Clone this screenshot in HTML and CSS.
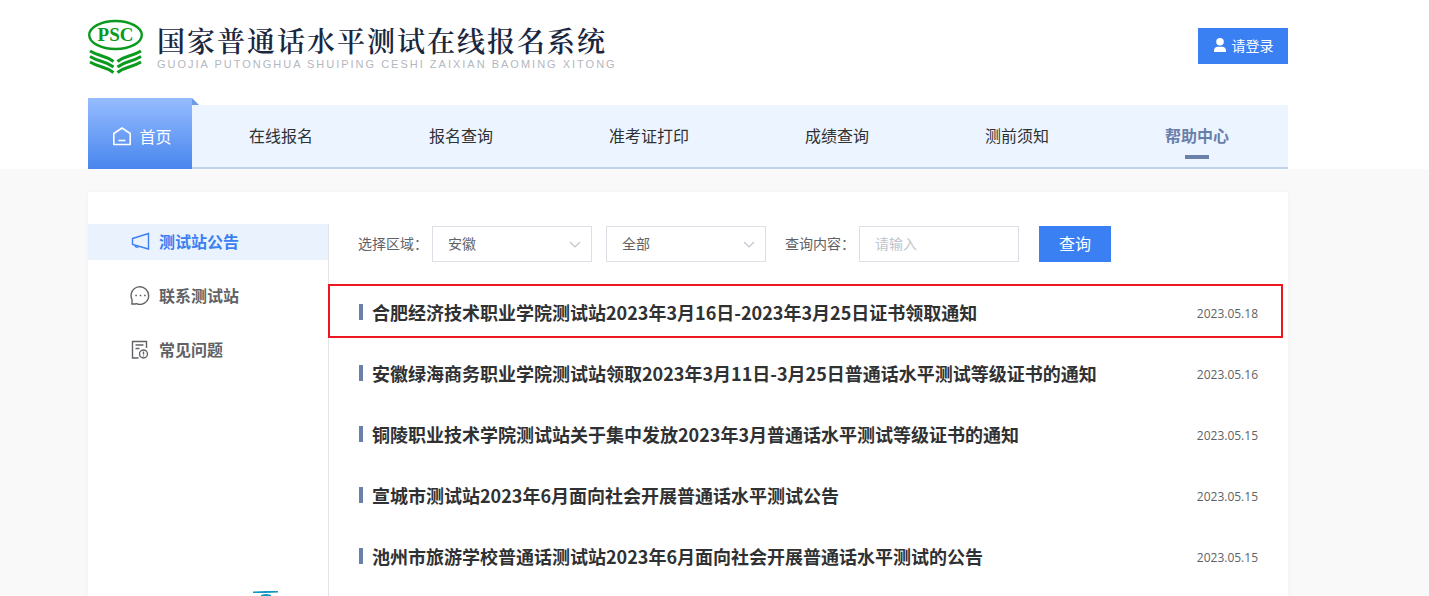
FILE: index.html
```html
<!DOCTYPE html>
<html lang="zh-CN">
<head>
    <meta charset="UTF-8">
    <meta name="viewport" content="width=device-width, initial-scale=1.0">
    <title>国家普通话水平测试在线报名系统</title>
    <link rel="stylesheet" href="styles.css">
</head>
<body>

<header class="header">
    <div class="container header-top">
        <a class="logo" href="#">
            <svg class="logo-mark" viewBox="0 -2 56 56" width="56" height="56" aria-hidden="true">
                <ellipse cx="27.5" cy="15" rx="26.3" ry="14" fill="#fff" stroke="#0a9a1e" stroke-width="2.4"/>
                <text class="logo-psc" x="27.5" y="21" text-anchor="middle">PSC</text>
                <g fill="none" stroke="#0a9a1e" stroke-width="3">
                    <path d="M2 31q5 3 12 5q7 2 11.500 5.500"/>
                    <path d="M2 36.500q5 3 12 5q7 2 11.500 5.500"/>
                    <path d="M2 42q5 3 12 5q7 2 11.500 5.500"/>
                    <path d="M53 31q-5 3-12 5q-7 2-11.500 5.500"/>
                    <path d="M53 36.500q-5 3-12 5q-7 2-11.500 5.500"/>
                    <path d="M53 42q-5 3-12 5q-7 2-11.500 5.500"/>
                </g>
            </svg>
            <span class="logo-text">
                <span class="logo-title">国家普通话水平测试在线报名系统</span>
                <span class="logo-pinyin">GUOJIA PUTONGHUA SHUIPING CESHI ZAIXIAN BAOMING XITONG</span>
            </span>
        </a>
        <button class="btn login" type="button">
            <svg viewBox="0 0 14 14" width="14" height="14" fill="#fff" aria-hidden="true">
                <circle cx="7" cy="3.800" r="3.800"/>
                <path d="M1 14v-1.500a4 4 0 0 1 4-3.700h4a4 4 0 0 1 4 3.700v1.500z"/>
            </svg>
            请登录
        </button>
    </div>

    <nav class="container nav">
        <a class="nav-home" href="#">
            <svg viewBox="0 0 20 20" width="20" height="20" fill="none" stroke="#fff" stroke-width="1.600" stroke-linejoin="round" aria-hidden="true">
                <path d="M1.800 7.500L10 2l8.200 5.500V18.500H1.800z"/>
                <path d="M6.500 14.500h7"/>
            </svg>
            首页
        </a>
        <div class="nav-bar">
            <a class="nav-link" href="#">在线报名</a>
            <a class="nav-link" href="#">报名查询</a>
            <a class="nav-link" href="#">准考证打印</a>
            <a class="nav-link" href="#">成绩查询</a>
            <a class="nav-link" href="#">测前须知</a>
            <a class="nav-link active" href="#">帮助中心</a>
        </div>
    </nav>
</header>

<main class="container panel">
    <aside class="sidebar">
        <a class="side-link active" href="#">
            <svg viewBox="0 0 20 20" width="20" height="20" fill="none" stroke="currentColor" stroke-width="1.400" aria-hidden="true">
                <path d="M2.500 7.500L18.500 2.500v15.500L2.500 13.500z"/>
                <path d="M5 14.200a2 2 0 0 0 3.700 1"/>
            </svg>
            测试站公告
        </a>
        <a class="side-link" href="#">
            <svg viewBox="0 0 20 20" width="20" height="20" fill="none" stroke="currentColor" stroke-width="1.400" aria-hidden="true">
                <path d="M2 19v-4.500A8.800 8.800 0 1 1 6.500 18.700L5 19z"/>
                <path d="M5.300 10.500h1.600M9.700 10.500h1.600M14.100 10.500h1.600" stroke-width="1.600"/>
            </svg>
            联系测试站
        </a>
        <a class="side-link" href="#">
            <svg viewBox="0 0 20 20" width="20" height="20" fill="none" stroke="currentColor" stroke-width="1.400" aria-hidden="true">
                <path d="M8.500 19H2.500V2.500h14V9M5.500 6h8M5.500 9.500h4"/>
                <circle cx="13.500" cy="15" r="4"/>
                <path d="M13.500 12.500v3M13.500 16.500v1"/>
            </svg>
            常见问题
        </a>
        <svg class="side-float" viewBox="0 0 26 6" width="26" height="6" aria-hidden="true">
            <path d="M0 1.500l13-.5L25 1v1.500L13 3 0 3z" fill="#1398c2"/>
            <path d="M8 5q5-2 10 0v1H8z" fill="#1398c2"/>
        </svg>
    </aside>

    <section class="content">
        <form class="filters">
            <label for="area">选择区域：</label>
            <div class="select-box">
                <select class="field" id="area">
                    <option>安徽</option>
                </select>
                <svg class="arrow" viewBox="0 0 12 8" width="12" height="8" fill="none" stroke="#c0c4cc" stroke-width="1.200" aria-hidden="true"><path d="M1 1l5 5 5-5"/></svg>
            </div>
            <div class="select-box">
                <select class="field" aria-label="城市">
                    <option>全部</option>
                </select>
                <svg class="arrow" viewBox="0 0 12 8" width="12" height="8" fill="none" stroke="#c0c4cc" stroke-width="1.200" aria-hidden="true"><path d="M1 1l5 5 5-5"/></svg>
            </div>
            <label class="label-query" for="keyword">查询内容：</label>
            <input class="field" id="keyword" type="text" placeholder="请输入">
            <button class="btn search" type="button">查询</button>
        </form>

        <ul class="news">
            <li class="news-item marked">
                <a href="#">合肥经济技术职业学院测试站2023年3月16日-2023年3月25日证书领取通知</a>
                <time>2023.05.18</time>
            </li>
            <li class="news-item">
                <a href="#">安徽绿海商务职业学院测试站领取2023年3月11日-3月25日普通话水平测试等级证书的通知</a>
                <time>2023.05.16</time>
            </li>
            <li class="news-item">
                <a href="#">铜陵职业技术学院测试站关于集中发放2023年3月普通话水平测试等级证书的通知</a>
                <time>2023.05.15</time>
            </li>
            <li class="news-item">
                <a href="#">宣城市测试站2023年6月面向社会开展普通话水平测试公告</a>
                <time>2023.05.15</time>
            </li>
            <li class="news-item">
                <a href="#">池州市旅游学校普通话测试站2023年6月面向社会开展普通话水平测试的公告</a>
                <time>2023.05.15</time>
            </li>
        </ul>
    </section>
</main>

</body>
</html>
```

FILE: styles.css
```css
*, *::before, *::after { box-sizing: border-box; }
body { margin: 0; min-height: 100vh; display: flex; flex-direction: column; background-color: #f9f9f9; color: #303133; font-family: "Open Sans", "Noto Sans CJK SC", sans-serif; font-size: 14px; }
a { color: inherit; text-decoration: none; }
button, input, select { font-family: inherit; }
.container { width: calc(100% - 229px); margin: 0 141px 0 88px; }
.btn { border: 0; padding: 0 0 2px; background-color: #3a80f3; color: #fff; height: 36px; cursor: pointer; }

/* header */
.header { background-color: #fff; }
.header-top { display: flex; justify-content: space-between; align-items: center; height: 98px; padding-bottom: 6px; }
.logo { display: flex; align-items: center; gap: 13px; }
.logo-psc { font-family: "Liberation Serif", serif; font-size: 19px; font-weight: bold; fill: #0a9a1e; }
.logo-text { display: flex; flex-direction: column; color: #1b2740; }
.logo-title { font-family: "Noto Serif CJK SC", "Noto Sans CJK SC", serif; font-size: 28px; font-weight: 600; line-height: 36px; letter-spacing: 2px; }
.logo-pinyin { font-family: "Liberation Sans", sans-serif; font-size: 11px; line-height: 12px; letter-spacing: 2px; color: #b4b7c0; }
.login { display: flex; align-items: center; justify-content: center; gap: 5px; width: 90px; font-size: 14px; }

/* nav */
.nav { display: flex; align-items: flex-end; font-size: 16px; }
.nav-home { position: relative; display: flex; align-items: center; justify-content: center; gap: 7px; width: 104px; height: 71px; padding: 4px 0 0 4px; color: #fff; background: linear-gradient(#96bcff, #4886ee); }
.nav-home::after { content: ""; position: absolute; left: 100%; top: 0; border-bottom: 7px solid #6b9ae6; border-right: 7px solid transparent; }
.nav-bar { flex: 1; display: flex; gap: 116px; height: 64px; padding-left: 57px; background-color: #ecf5ff; border-bottom: 2px solid #c0d3ea; }
.nav-link { position: relative; line-height: 62px; white-space: nowrap; }
.nav-link.active { color: #6980ab; font-weight: bold; }
.nav-link.active::after { content: ""; position: absolute; left: 20px; right: 20px; bottom: 8px; height: 4px; background-color: #6980ab; }

/* panel */
.panel { flex: 1; display: flex; margin-top: 23px; padding-top: 32px; background-color: #fff; box-shadow: 0 0 4px rgba(0,0,0,0.04); }
.sidebar { flex: none; display: flex; flex-direction: column; gap: 18px; width: 241px; border-right: 1px solid #e4e4e6; }
.side-link { display: flex; align-items: center; gap: 9px; height: 36px; padding: 0 0 2px 42px; font-size: 16px; font-weight: bold; color: #606266; }
.side-link.active { background-color: #eaf2fe; color: #3a80f3; }
.side-float { margin-top: auto; margin-left: 165px; }
.content { flex: 1; padding: 2px 30px 0; }

/* filters */
.filters { display: flex; align-items: center; margin-left: -1px; color: #606266; }
.filters label { width: 74px; padding-bottom: 2px; white-space: nowrap; }
.filters .label-query { margin-left: 5px; }
.field { display: block; width: 160px; height: 36px; padding: 0 15px 2px; border: 1px solid #dcdfe6; border-radius: 0; background-color: #fff; color: #606266; font-size: 14px; appearance: none; }
.field::placeholder { color: #c0c4cc; }
.select-box { position: relative; margin-right: 14px; }
.arrow { position: absolute; right: 11px; top: 15px; }
.search { width: 72px; margin-left: 20px; font-size: 16px; }

/* news list */
.news { list-style: none; margin: 19px 0 0; padding: 0; }
.news-item { position: relative; display: flex; align-items: center; justify-content: space-between; height: 61px; }
.news-item a { display: flex; align-items: center; gap: 9px; font-family: "Noto Sans CJK SC", sans-serif; font-size: 18px; font-weight: bold; white-space: nowrap; }
.news-item a::before { content: ""; width: 4px; height: 16px; background-color: #6980ab; }
.news-item time { padding-top: 4px; font-size: 12px; color: #606266; }
.marked::after { content: ""; position: absolute; left: -31px; right: -25px; top: 3px; height: 54px; border: 2px solid #ee1620; pointer-events: none; }
```
